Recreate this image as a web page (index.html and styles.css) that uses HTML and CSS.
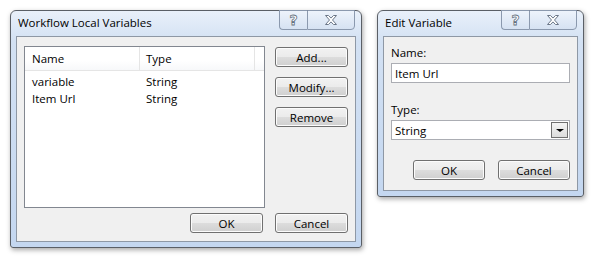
FILE: index.html
```html
<!DOCTYPE html>
<html lang="en">
<head>
<meta charset="UTF-8">
<title>Workflow Local Variables</title>
<link rel="stylesheet" href="styles.css">
</head>
<body>

<div class="desktop">

    <!-- main dialog -->
    <div class="window win-vars">
        <div class="titlebar">
            <span class="title">Workflow Local Variables</span>
            <div class="caption-btns">
                <span class="cap-btn cap-help">?</span>
                <span class="cap-btn cap-close">
                    <svg width="12" height="10" viewBox="0 0 12 10">
                        <path d="M0.5 0.5h3l2.5 2.6 2.5-2.6h3l-4 4.5 4 4.5h-3l-2.5-2.6-2.5 2.6h-3l4-4.5z" fill="#fff" stroke="#6b7788" stroke-width="1" stroke-linejoin="round"/>
                    </svg>
                </span>
            </div>
        </div>
        <div class="client vars-client">
            <div class="listview">
                <div class="lv-header">
                    <div class="lv-col col-name">Name</div>
                    <div class="lv-col col-type">Type</div>
                    <div class="lv-col col-rest"></div>
                </div>
                <div class="lv-row">
                    <div class="col-name">variable</div>
                    <div class="col-type">String</div>
                </div>
                <div class="lv-row">
                    <div class="col-name">Item Url</div>
                    <div class="col-type">String</div>
                </div>
            </div>
            <div class="side-btns">
                <button class="btn">Add...</button>
                <button class="btn">Modify...</button>
                <button class="btn">Remove</button>
            </div>
            <button class="btn btn-ok">OK</button>
            <button class="btn">Cancel</button>
        </div>
    </div>

    <!-- edit dialog -->
    <div class="window win-edit">
        <div class="titlebar">
            <span class="title">Edit Variable</span>
            <div class="caption-btns">
                <span class="cap-btn cap-help">?</span>
                <span class="cap-btn cap-close">
                    <svg width="12" height="10" viewBox="0 0 12 10">
                        <path d="M0.5 0.5h3l2.5 2.6 2.5-2.6h3l-4 4.5 4 4.5h-3l-2.5-2.6-2.5 2.6h-3l4-4.5z" fill="#fff" stroke="#6b7788" stroke-width="1" stroke-linejoin="round"/>
                    </svg>
                </span>
            </div>
        </div>
        <div class="client edit-client">
            <label class="field-label" for="varName">Name:</label>
            <input class="textbox" id="varName" type="text" value="Item Url">
            <label class="field-label type-label">Type:</label>
            <div class="combo">
                <span class="combo-text">String</span>
                <span class="combo-arrow"></span>
            </div>
            <div class="edit-btns">
                <button class="btn">OK</button>
                <button class="btn">Cancel</button>
            </div>
        </div>
    </div>

</div>

</body>
</html>
```

FILE: styles.css
```css
body {
    margin: 0;
    background: #fff;
    font-family: "Open Sans", "Liberation Sans", sans-serif;
    font-size: 11.5px;
    color: #000;
}
.desktop {
    display: flex;
    align-items: flex-start;
    gap: 15px;
    padding: 10px;
}
.window {
    border: 1px solid #5a5f66;
    border-radius: 6px 6px 3px 3px;
    background: linear-gradient(#e9f0fa, #d3e1f3 30px, #c4d7f0);
    padding: 0 5px 5px;
    box-shadow: 1px 2px 5px rgba(0, 0, 0, 0.35);
}
.titlebar {
    height: 25px;
    display: flex;
    align-items: flex-start;
    justify-content: space-between;
}
.title {
    padding: 4px 0 0 2px;
    font-size: 11.5px;
}
.caption-btns {
    display: flex;
    margin-top: -1px;
    margin-right: 1px;
}
.cap-btn {
    height: 18px;
    border: 1px solid #8b99ae;
    background: linear-gradient(#edf3fb, #d6e2f2);
    display: flex;
    align-items: center;
    justify-content: center;
}
.cap-help {
    width: 27px;
    border-radius: 0 0 0 4px;
    border-right: none;
    font-family: "DejaVu Sans", sans-serif;
    font-weight: bold;
    font-size: 14px;
    line-height: 18px;
    color: #fff;
    -webkit-text-stroke: 0.8px #66727f;
}
.cap-close {
    width: 46px;
    border-radius: 0 0 4px 0;
}
.client {
    border: 1px solid #8e98a5;
    background: #f0f0f0;
}

/* main dialog */
.vars-client {
    display: grid;
    grid-template-columns: 241px 73px;
    grid-template-rows: 162px 20px;
    column-gap: 10px;
    row-gap: 5px;
    padding: 9px 7px 8px;
}
.listview {
    background: #fff;
    border: 1px solid #828790;
}
.lv-header {
    display: flex;
    height: 23px;
    border-bottom: 1px solid #e5e5e5;
    background: linear-gradient(#fff, #fff 60%, #f7f8fa);
}
.lv-col {
    line-height: 23px;
    border-right: 1px solid #e5e5e5;
}
.col-name {
    width: 107px;
    padding-left: 7px;
}
.col-type {
    width: 108px;
    padding-left: 6px;
}
.lv-col.col-rest {
    flex: 1;
    border-right: none;
}
.lv-row {
    display: flex;
    height: 17px;
    line-height: 17px;
}
.lv-header + .lv-row {
    margin-top: 2px;
}
.lv-row .col-name {
    width: 108px;
}
.side-btns {
    display: flex;
    flex-direction: column;
    gap: 10px;
    padding-top: 1px;
}
.btn {
    height: 20px;
    width: 73px;
    padding: 0;
    border: 1px solid #707070;
    border-radius: 3px;
    background: linear-gradient(#f2f2f2, #ebebeb 50%, #dddddd 50%, #cfcfcf);
    font-family: inherit;
    font-size: 11.5px;
    color: #000;
    box-shadow: inset 0 0 0 1px #fcfcfc;
}
.btn-ok {
    justify-self: end;
    margin-right: 2px;
}

/* edit dialog */
.edit-client {
    width: 179px;
    padding: 8px 7px 10px;
    display: flex;
    flex-direction: column;
}
.field-label {
    line-height: 16px;
    margin-bottom: 2px;
}
.textbox {
    box-sizing: border-box;
    height: 20px;
    width: 179px;
    margin: 0;
    padding: 0 3px;
    border: 1px solid #abadb3;
    font-family: inherit;
    font-size: 11.5px;
    color: #000;
    outline: none;
}
.type-label {
    margin-top: 19px;
}
.combo {
    box-sizing: border-box;
    height: 20px;
    border: 1px solid #abadb3;
    background: #fff;
    display: flex;
    align-items: center;
    justify-content: space-between;
    padding: 0 1px 0 3px;
}
.combo-arrow {
    width: 15px;
    height: 14px;
    border: 1px solid #707070;
    background: linear-gradient(#f4f4f4, #dcdcdc);
    position: relative;
}
.combo-arrow::after {
    content: "";
    position: absolute;
    left: 4px;
    top: 6px;
    border-left: 4px solid transparent;
    border-right: 4px solid transparent;
    border-top: 3px solid #000;
}
.edit-btns {
    display: flex;
    justify-content: flex-end;
    gap: 13px;
    margin-top: 20px;
}
.edit-btns .btn {
    width: 72px;
}
```
